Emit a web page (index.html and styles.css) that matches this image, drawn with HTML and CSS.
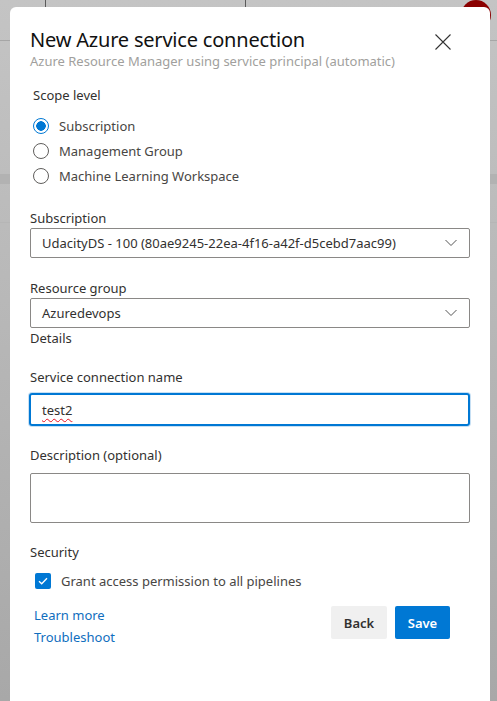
FILE: index.html
```html
<!DOCTYPE html>
<html>
<head>
<meta charset="utf-8">
<link rel="stylesheet" href="styles.css">
</head>
<body>
<div class="backdrop">
  <div class="bg-avatar"></div>
</div>
<div class="dialog">
  <div class="header">
    <div class="titles">
      <h1 class="title">New Azure service connection</h1>
      <div class="subtitle">Azure Resource Manager using service principal (automatic)</div>
    </div>
    <button class="close" aria-label="Close">
      <svg width="16" height="16" viewBox="0 0 16 16"><path d="M0.5 0.5 L15.5 15.5 M15.5 0.5 L0.5 15.5" stroke="#333" stroke-width="1.1" fill="none"/></svg>
    </button>
  </div>

  <div class="section-label scope">Scope level</div>
  <div class="radios">
    <label class="radio"><span class="radio-dot checked"></span><span>Subscription</span></label>
    <label class="radio"><span class="radio-dot"></span><span>Management Group</span></label>
    <label class="radio"><span class="radio-dot"></span><span>Machine Learning Workspace</span></label>
  </div>

  <div class="field sub-field">
    <div class="label">Subscription</div>
    <div class="select"><span>UdacityDS - 100 (80ae9245-22ea-4f16-a42f-d5cebd7aac99)</span>
      <svg width="12" height="8" viewBox="0 0 12 8"><path d="M0.5 1 L6 6.5 L11.5 1" stroke="#555" stroke-width="1" fill="none"/></svg>
    </div>
  </div>

  <div class="field rg-field">
    <div class="label">Resource group</div>
    <div class="select"><span>Azuredevops</span>
      <svg width="12" height="8" viewBox="0 0 12 8"><path d="M0.5 1 L6 6.5 L11.5 1" stroke="#555" stroke-width="1" fill="none"/></svg>
    </div>
  </div>

  <div class="label details">Details</div>

  <div class="field name-field">
    <div class="label">Service connection name</div>
    <div class="input focused"><span class="typed">test2</span></div>
  </div>

  <div class="field desc-field">
    <div class="label">Description (optional)</div>
    <div class="textarea"></div>
  </div>

  <div class="label security">Security</div>
  <label class="check"><span class="box"><svg width="10" height="8" viewBox="0 0 10 8"><path d="M1 4.2 L3.7 6.8 L9 1.2" stroke="#fff" stroke-width="1.3" fill="none"/></svg></span><span>Grant access permission to all pipelines</span></label>

  <div class="footer">
    <div class="links">
      <a class="link">Learn more</a>
      <a class="link">Troubleshoot</a>
    </div>
    <div class="buttons">
      <button class="btn back">Back</button>
      <button class="btn save">Save</button>
    </div>
  </div>
</div>
</body>
</html>
```
FILE: styles.css
```css
* { box-sizing: border-box; }
html, body { margin: 0; height: 100%; }
body {
  font-family: "Noto Sans", "Open Sans", sans-serif;
  color: #323130;
  background: linear-gradient(#c4c4c4, #a8a8a8);
  position: relative;
  overflow: hidden;
  padding: 7px 7px 0 10px;
}
.backdrop {
  position: absolute;
  inset: 0;
  z-index: 0;
  background:
    linear-gradient(90deg, transparent 45px, #5a5a5a 45px, #5a5a5a 46px, transparent 46px),
    linear-gradient(90deg, transparent 245px, #5a5a5a 245px, #5a5a5a 246px, transparent 246px),
    linear-gradient(transparent 40px, #a6a6a6 40px, #a6a6a6 41px, transparent 41px),
    linear-gradient(transparent 174px, #b2b2b2 174px, #b2b2b2 184px, transparent 184px),
    linear-gradient(transparent 222px, #b6b6b6 222px, #b6b6b6 223px, transparent 223px);
}
.bg-avatar {
  position: absolute;
  left: 461px;
  top: 0;
  width: 30px;
  height: 30px;
  border-radius: 50%;
  background: #8a0000;
}
.dialog {
  position: relative;
  z-index: 1;
  background: #fff;
  height: 100%;
  border-radius: 6px 6px 0 0;
  padding: 20px 20px 0 20px;
  display: flex;
  flex-direction: column;
}
.header {
  display: flex;
  justify-content: space-between;
  align-items: flex-start;
}
.title {
  margin: 0;
  font-size: 20px;
  font-weight: 400;
  line-height: 26px;
  color: #111;
  letter-spacing: -0.2px;
}
.subtitle {
  font-size: 13px;
  color: #a19f9d;
  line-height: 16px;
  margin-top: 0;
}
.close {
  border: 0;
  background: none;
  padding: 0;
  margin: 7px 19px 0 0;
  width: 16px;
  height: 16px;
}
.close svg { display: block; }
.section-label, .label {
  font-size: 13px;
  line-height: 18px;
  color: #323130;
}
.scope { margin: 17px 0 0 3px; }
.radios { display: flex; flex-direction: column; gap: 7px; margin-top: 13px; margin-left: 3px; }
.radio { display: flex; align-items: center; gap: 10px; font-size: 13px; color: #484644; line-height: 18px; }
.radio-dot {
  width: 16px; height: 16px; border-radius: 50%;
  border: 1px solid #605e5c; flex: none;
}
.radio-dot.checked {
  border-color: #0078d4;
  background: radial-gradient(circle, #0078d4 0 4.5px, #fff 5px);
}
.field { display: flex; flex-direction: column; gap: 1px; }
.sub-field { margin-top: 24px; }
.rg-field { margin-top: 21px; }
.select {
  height: 30px;
  border: 1px solid #8a8886;
  border-radius: 2px;
  width: 440px;
  display: flex;
  align-items: center;
  justify-content: space-between;
  padding: 0 12px 0 11px;
  font-size: 13px;
  color: #323130;
}
.details { margin-top: 1px; }
.name-field { margin-top: 21px; }
.name-field .label { margin-bottom: 6px; }
.input {
  height: 33px;
  width: 441px;
  margin-left: -1px;
  border: 2px solid #0078d4;
  border-radius: 3px;
  display: flex;
  align-items: center;
  padding-left: 11px;
  font-size: 13px;
  box-shadow: 0 0 0 1px #c7e0f4;
}
.typed {
  text-decoration: underline wavy #e81123;
  text-decoration-thickness: 1px;
  text-underline-offset: 3px;
}
.desc-field { margin-top: 20px; }
.desc-field .label { margin-bottom: 8px; }
.textarea {
  height: 50px;
  width: 440px;
  border: 1px solid #8a8886;
  border-radius: 2px;
}
.security { margin-top: 20px; }
.check { display: flex; align-items: center; gap: 10px; margin: 11px 0 0 5px; font-size: 13px; color: #484644; }
.box {
  width: 16px; height: 16px; border-radius: 2px; background: #0078d4;
  display: flex; align-items: center; justify-content: center; flex: none;
}
.box svg { display: block; }
.footer {
  display: flex;
  justify-content: space-between;
  align-items: flex-start;
  margin-top: 13px;
  padding-right: 20px;
}
.links { display: flex; flex-direction: column; margin-left: 4px; margin-top: 3px; gap: 4px; }
.link { color: #106ebe; font-size: 13px; line-height: 18px; cursor: pointer; }
.buttons { display: flex; gap: 8px; margin-top: 3px; }
.btn {
  height: 33px;
  border: 0;
  border-radius: 2px;
  font-family: inherit;
  font-size: 13px;
  font-weight: 600;
  padding: 0;
}
.back { width: 56px; background: #f0f0f0; color: #323130; }
.save { width: 55px; background: #0078d4; color: #fff; }
```
